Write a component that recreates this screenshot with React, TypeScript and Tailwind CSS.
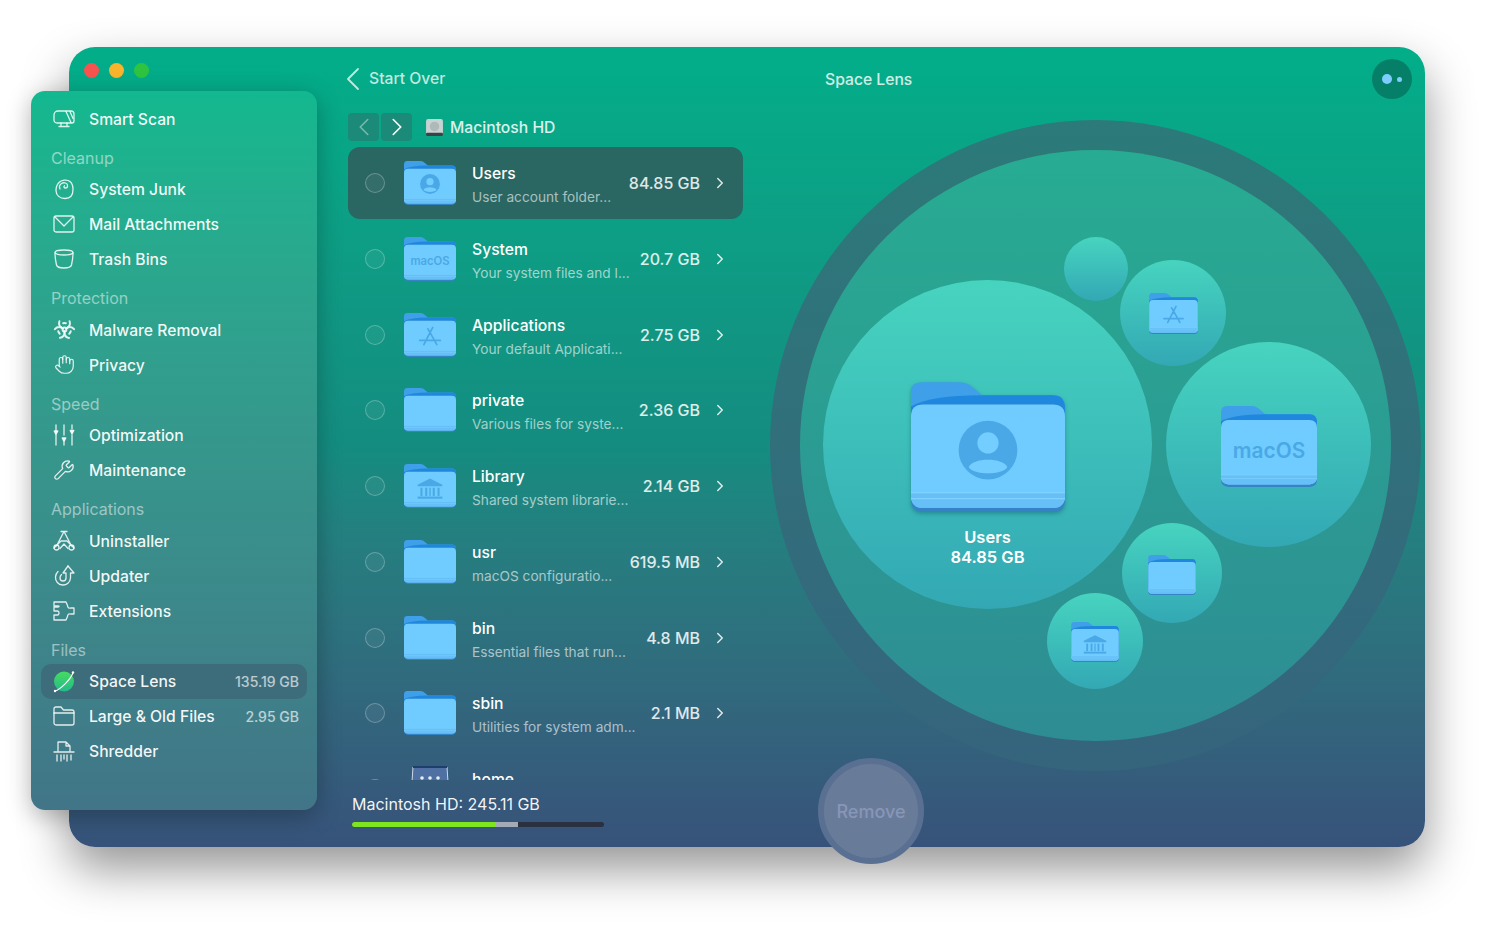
import type { ReactNode } from 'react';
import { Biohazard, ChevronLeft, ChevronRight, Hand, Wrench } from 'lucide-react';

type IconProps = { children: ReactNode };

function Line({ children }: IconProps) {
  return (
    <svg viewBox="0 0 24 24" fill="none" stroke="currentColor" strokeWidth="1.3" strokeLinecap="round" strokeLinejoin="round" className="h-[24px] w-[24px]">
      {children}
    </svg>
  );
}

const sideIcons: Record<string, ReactNode> = {
  scan: (
    <Line>
      <path d="M6 4h13a3 3 0 0 1 3 3v7a2 2 0 0 1-2 2H5a3 3 0 0 1-3-3V8a4 4 0 0 1 4-4z" />
      <path d="M14 4.500l5 11M18 4.500l3 7" />
      <path d="M9 16v2.500M15 16v2.500M7 19.500h10" />
    </Line>
  ),
  junk: (
    <Line>
      <path d="M7 5.500C9 3 15 2 18 4.500c2.500 2 3 5 3 8 0 5-2 9-8 9-5 0-9-3-9-8 0-3 1-6 3-8z" />
      <path d="M8 12c-2-4 2-7 5.500-6 3 1 2.500 5 0 5-1.500 0-2-1.500-1-2.300" />
    </Line>
  ),
  mail: (
    <Line>
      <rect x="2" y="4" width="20" height="16" rx="2" />
      <path d="M3 5l9 9 9-9" />
    </Line>
  ),
  trash: (
    <Line>
      <ellipse cx="12" cy="5.500" rx="9" ry="2.500" />
      <path d="M3 6c0 5 .8 9 1.500 12 .5 2 2.500 3 7.500 3s7-1 7.500-3c.7-3 1.500-7 1.500-12" />
    </Line>
  ),
  malware: <Biohazard className="h-[23px] w-[23px]" strokeWidth={2.1} />,
  privacy: <Hand className="h-[23px] w-[21px]" strokeWidth={1.4} />,
  optimization: (
    <Line>
      <path d="M4 2v6M4 12v10M12 2v10M12 19v3M20 2v4M20 12v10" />
      <path d="M2.200 8h3.600L4 11.500zM10.200 15h3.600L12 18.500zM18.200 7.500h3.600L20 11z" fill="currentColor" />
    </Line>
  ),
  maintenance: <Wrench className="h-[22px] w-[22px]" strokeWidth={1.4} />,
  uninstaller: (
    <Line>
      <path d="M12 2.500L4.500 17M12 2.500L19.500 17M9 2.500l6 0M2 19l7-7h6l7 7" />
      <circle cx="4.500" cy="18.500" r="2.500" />
      <circle cx="19.500" cy="18.500" r="2.500" />
      <path d="M8 19.500l4-4.500 4 4.500" />
    </Line>
  ),
  updater: (
    <Line>
      <path d="M16 2l6 7h-3.500v5a7.500 7.500 0 1 1-15-1c0-2.500 1-4 2.500-5.500" />
      <path d="M16 2l-5 7h3v5a3 3 0 1 1-6 0c0-1.500.5-2.500 1.500-3.500" />
    </Line>
  ),
  extensions: (
    <Line>
      <path d="M2 3h12l1.500 3.500c0 2 1.500 3 3 2.500H22v6h-3.500c-1.500-.5-3 .5-3 2.500L14 21H2v-5h3.500c2 0 2-4 0-4H2V8h4c1.500 0 1.500-1 0-1H2z" />
    </Line>
  ),
  large: (
    <Line>
      <path d="M2 7V5a2 2 0 0 1 2-2h5l2.500 3H20a2 2 0 0 1 2 2v11a2 2 0 0 1-2 2H4a2 2 0 0 1-2-2z" />
      <path d="M2 9h20" />
    </Line>
  ),
  shredder: (
    <Line>
      <path d="M6 12V3h8l4 4v5M14 3v4h4" />
      <path d="M2 13h20M5 16v6M9 16v6M12 16v4M15 16v6M19 16v5" />
    </Line>
  ),
  lens: (
    <svg viewBox="0 0 24 24" fill="none" className="h-[25px] w-[25px]">
      <defs>
        <linearGradient id="globe" x1="0" y1="0" x2="0" y2="1">
          <stop offset="0" stopColor="#45dc5f" />
          <stop offset="1" stopColor="#25b98c" />
        </linearGradient>
      </defs>
      <circle cx="12" cy="12" r="10" fill="url(#globe)" />
      <path d="M3 21.500C8 20 19 10 21 3" stroke="white" strokeWidth="1.100" strokeLinecap="round" />
      <circle cx="3" cy="21.500" r="1.200" fill="white" />
      <circle cx="21" cy="3" r="1.200" fill="white" />
    </svg>
  ),
};

type SideItem = { id: string; label: string; value?: string; active?: boolean };
type SideGroup = { title?: string; items: SideItem[] };

const groups: SideGroup[] = [
  { items: [{ id: 'scan', label: 'Smart Scan' }] },
  {
    title: 'Cleanup',
    items: [
      { id: 'junk', label: 'System Junk' },
      { id: 'mail', label: 'Mail Attachments' },
      { id: 'trash', label: 'Trash Bins' },
    ],
  },
  {
    title: 'Protection',
    items: [
      { id: 'malware', label: 'Malware Removal' },
      { id: 'privacy', label: 'Privacy' },
    ],
  },
  {
    title: 'Speed',
    items: [
      { id: 'optimization', label: 'Optimization' },
      { id: 'maintenance', label: 'Maintenance' },
    ],
  },
  {
    title: 'Applications',
    items: [
      { id: 'uninstaller', label: 'Uninstaller' },
      { id: 'updater', label: 'Updater' },
      { id: 'extensions', label: 'Extensions' },
    ],
  },
  {
    title: 'Files',
    items: [
      { id: 'lens', label: 'Space Lens', value: '135.19 GB', active: true },
      { id: 'large', label: 'Large & Old Files', value: '2.95 GB' },
      { id: 'shredder', label: 'Shredder' },
    ],
  },
];

function Folder({ className, children }: { className: string; children?: ReactNode }) {
  return (
    <svg viewBox="0 0 152 128" className={className}>
      <path d="M0 30V10Q0 0 10 0H48Q56 0 62 6L70 13H140Q152 13 152 26V40H0Z" fill="#3f9fe8" />
      <path d="M0 24Q20 13 70 13H140Q152 13 152 26V40H0Z" fill="#1f87de" />
      <path d="M0 34Q0 22 12 22H140Q152 22 152 34V116Q152 128 140 128H12Q0 128 0 116Z" fill="#3583c4" />
      <path d="M0 34Q0 22 12 22H140Q152 22 152 34V112Q152 124 140 124H12Q0 124 0 112Z" fill="#70ccff" />
      <path d="M0 109H152V112Q152 124 140 124H12Q0 124 0 112Z" fill="#66bff7" />
      <path d="M0 109H152M0 115H152" stroke="#7fd2ff" strokeWidth="1.200" />
      {children}
    </svg>
  );
}

const glyph = '#4aa8e6';

const UserGlyph = (
  <g>
    <circle cx="76" cy="67" r="29" fill={glyph} />
    <circle cx="76" cy="60" r="10.500" fill="#74cdff" />
    <path d="M57 84C60 74 92 74 95 84C90 92 62 92 57 84Z" fill="#74cdff" />
  </g>
);

const AppGlyph = (
  <g fill="none" stroke={glyph} strokeWidth="5" strokeLinecap="round">
    <path d="M84 42L58 92M70 46L96 92M46 80H106M76 58L68 72" />
  </g>
);

const BankGlyph = (
  <g fill={glyph}>
    <path d="M76 42L112 60V65H40V60Z" />
    <rect x="48" y="69" width="6" height="24" />
    <rect x="62" y="69" width="6" height="24" />
    <rect x="84" y="69" width="6" height="24" />
    <rect x="98" y="69" width="6" height="24" />
    <rect x="74" y="69" width="4" height="24" />
    <rect x="40" y="95" width="72" height="6" />
  </g>
);

const MacGlyph = (
  <text x="76" y="82" textAnchor="middle" fontFamily="Inter, sans-serif" fontWeight="600" fontSize="33" fill={glyph}>
    macOS
  </text>
);

type Row = { name: string; desc: string; size: string; glyph?: ReactNode; selected?: boolean; home?: boolean };

const rows: Row[] = [
  { name: 'Users', desc: 'User account folder...', size: '84.85 GB', glyph: UserGlyph, selected: true },
  { name: 'System', desc: 'Your system files and l...', size: '20.7 GB', glyph: MacGlyph },
  { name: 'Applications', desc: 'Your default Applicati...', size: '2.75 GB', glyph: AppGlyph },
  { name: 'private', desc: 'Various files for syste...', size: '2.36 GB' },
  { name: 'Library', desc: 'Shared system librarie...', size: '2.14 GB', glyph: BankGlyph },
  { name: 'usr', desc: 'macOS configuratio...', size: '619.5 MB' },
  { name: 'bin', desc: 'Essential files that run...', size: '4.8 MB' },
  { name: 'sbin', desc: 'Utilities for system adm...', size: '2.1 MB' },
  { name: 'home', desc: '', size: '', home: true },
];

function Sidebar() {
  return (
    <aside className="mt-[13px] flex h-[719px] w-[286px] flex-col rounded-[14px] bg-gradient-to-b from-[#12b88f] to-[#417587] pt-[10px] shadow-[0_6px_24px_rgba(0,0,0,0.28)]">
      {groups.map((group, i) => (
        <div key={i}>
          {group.title && (
            <div className="flex h-[35.5px] items-end pb-[4px] pl-[20px] text-[16px] leading-[20px] text-white/50">{group.title}</div>
          )}
          {group.items.map((item) => (
            <div
              key={item.id}
              className={`mx-[10px] flex h-[35px] items-center rounded-[10px] pl-[11px] pr-[8px] ${item.active ? 'bg-[#3d6c7b]' : ''}`}
            >
              <span className="flex w-[24px] items-center justify-center text-white/85">{sideIcons[item.id]}</span>
              <span className="ml-[13px] pt-[2px] text-[15.7px] font-medium text-white/95">{item.label}</span>
              {item.value && <span className="ml-auto text-[14px] font-medium text-white/65">{item.value}</span>}
            </div>
          ))}
        </div>
      ))}
    </aside>
  );
}

function FileRow({ row }: { row: Row }) {
  return (
    <div className={`flex h-[72px] shrink-0 items-center rounded-[12px] ${row.selected ? 'bg-[#2a6662]' : ''}`}>
      <span className="ml-[17px] h-[20px] w-[20px] shrink-0 rounded-full border-[1.5px] border-white/25 bg-white/5" />
      {row.home ? (
        <svg viewBox="0 0 40 46" className="ml-[25px] mr-[22px] h-[46px] w-[40px]">
          <path d="M3 1H37L40 46H0Z" fill="#4f70a3" stroke="#cfd9e6" strokeWidth="1" />
          <path d="M3 1H37" stroke="#1d3f6a" strokeWidth="2" />
          <circle cx="12" cy="12" r="1.800" fill="#e8eef5" />
          <circle cx="20" cy="12" r="1.800" fill="#e8eef5" />
          <circle cx="28" cy="12" r="1.800" fill="#e8eef5" />
        </svg>
      ) : (
        <span className="ml-[19px] mr-[16px] flex">
          <Folder className="h-[44px] w-[52px]">{row.glyph}</Folder>
        </span>
      )}
      <div className="flex min-w-0 flex-1 flex-col pt-[4px]">
        <span className="h-[24px] text-[15.7px] font-medium leading-[26px] text-white">{row.name}</span>
        <span className="h-[24px] text-[13.7px] leading-[24px] text-white/60">{row.desc}</span>
      </div>
      {row.size && <span className="text-[16px] font-medium text-white/85">{row.size}</span>}
      {row.size && <ChevronRight className="ml-[11px] mr-[14px] h-[18px] w-[18px] text-white/85" strokeWidth={2} />}
    </div>
  );
}

function Bubble({ className, children }: { className: string; children?: ReactNode }) {
  return (
    <div className={`absolute flex items-center justify-center rounded-full bg-gradient-to-b from-[#47d4bf] to-[#33a8b4] ${className}`}>
      {children}
    </div>
  );
}

function LensMap() {
  return (
    <div className="ml-[27px] mt-[25px] flex h-[651px] w-[651px] shrink-0 items-center justify-center rounded-full bg-gradient-to-b from-[#2c7a79] to-[#35647d]">
      <div className="relative h-[591px] w-[591px] rounded-full bg-gradient-to-b from-[#27ac92] to-[#2e8c93]">
        <Bubble className="left-[23px] top-[130px] h-[329px] w-[329px] flex-col justify-start pt-[102px]">
          <Folder className="h-[130px] w-[154px] drop-shadow-[0_2px_2px_rgba(0,60,90,0.35)]">{UserGlyph}</Folder>
          <span className="mt-[15px] text-center text-[16.5px] font-semibold leading-[20px] text-white">
            Users
            <br />
            84.85 GB
          </span>
        </Bubble>
        <Bubble className="left-[264px] top-[87px] h-[64px] w-[64px]" />
        <Bubble className="left-[320px] top-[110px] h-[106px] w-[106px]">
          <Folder className="h-[41px] w-[49px]">{AppGlyph}</Folder>
        </Bubble>
        <Bubble className="left-[366px] top-[192px] h-[205px] w-[205px]">
          <Folder className="mt-[4px] h-[81px] w-[96px]">{MacGlyph}</Folder>
        </Bubble>
        <Bubble className="left-[322px] top-[373px] h-[100px] w-[100px]">
          <Folder className="mt-[3px] h-[40px] w-[48px]" />
        </Bubble>
        <Bubble className="left-[247px] top-[443px] h-[96px] w-[96px]">
          <Folder className="mt-[2px] h-[40px] w-[48px]">{BankGlyph}</Folder>
        </Bubble>
      </div>
    </div>
  );
}

export default function App() {
  return (
    <div className="h-[939px] w-[1494px] overflow-hidden bg-white pl-[69px] pt-[47px] font-[Inter,sans-serif]">
      <div className="relative flex h-[800px] w-[1356px] rounded-[26px] bg-gradient-to-b from-[#02ae89] via-[#148c80] via-50% to-[#37527a] shadow-[0_22px_48px_rgba(0,0,0,0.42)]">
        <div className="-ml-[38px] flex flex-col">
          <div className="flex h-[31px] items-end gap-[10px] pl-[53px]">
            <span className="h-[15px] w-[15px] rounded-full bg-[#f7544f]" />
            <span className="h-[15px] w-[15px] rounded-full bg-[#fab42b]" />
            <span className="h-[15px] w-[15px] rounded-full bg-[#2fc43f]" />
          </div>
          <Sidebar />
        </div>

        <div className="ml-[31px] flex flex-1 flex-col pt-[16px]">
          <header className="flex h-[32px] items-center pr-[13px]">
            <div className="flex w-[477px] items-center text-white/75">
              <ChevronLeft className="-ml-[15px] h-[40px] w-[40px]" strokeWidth={1.1} />
              <span className="-ml-[4px] text-[15.7px] font-medium">Start Over</span>
            </div>
            <span className="pt-[2px] text-[15.7px] font-medium text-white/80">Space Lens</span>
            <button className="ml-auto flex h-[40px] w-[40px] items-center justify-center gap-[5px] rounded-full bg-[#067f68]">
              <span className="h-[10px] w-[10px] rounded-full bg-[#7dcdff]" />
              <span className="h-[5px] w-[5px] rounded-full bg-[#7dcdff]" />
            </button>
          </header>

          <div className="flex">
            <div className="flex w-[395px] shrink-0 flex-col">
              <div className="mt-[18px] flex h-[28px] items-center">
                <span className="flex h-[28px] w-[31px] items-center justify-center rounded-[4px] bg-[#1c8a78] text-white/40">
                  <ChevronLeft className="h-[30px] w-[30px]" strokeWidth={1.3} />
                </span>
                <span className="ml-[2px] flex h-[28px] w-[31px] items-center justify-center rounded-[4px] bg-[#1c8a78] text-white">
                  <ChevronRight className="h-[30px] w-[30px]" strokeWidth={1.3} />
                </span>
                <svg viewBox="0 0 18 18" className="ml-[13px] h-[19px] w-[19px]">
                  <rect x="1" y="1" width="16" height="16" rx="2" fill="#c9d2d2" />
                  <circle cx="9" cy="8" r="4.500" fill="#aeb9b9" />
                  <rect x="1" y="14" width="16" height="3" rx="1" fill="#3a4444" />
                </svg>
                <span className="ml-[6px] pt-[2px] text-[15.7px] font-medium text-white/85">Macintosh HD</span>
              </div>
              <div className="mt-[6px] flex h-[633px] flex-col gap-[3.75px] overflow-hidden">
                {rows.map((row) => (
                  <FileRow key={row.name} row={row} />
                ))}
              </div>
              <div className="ml-[4px] mt-[14px] text-[16px] leading-[20px] text-white/95">Macintosh HD: 245.11 GB</div>
              <div className="ml-[4px] mt-[8px] flex h-[5px] w-[252px] overflow-hidden rounded-full bg-[#2b3040]">
                <span className="w-[144px] bg-[#7fe51f]" />
                <span className="w-[22px] bg-[#a4aab6]" />
              </div>
            </div>
            <LensMap />
          </div>
        </div>

        <button className="absolute left-[749px] top-[711px] flex h-[106px] w-[106px] items-center justify-center rounded-full border-[6px] border-[#5a7093] bg-[#687c99] text-[18px] font-medium text-[#8895b8]">
          Remove
        </button>
      </div>
    </div>
  );
}
